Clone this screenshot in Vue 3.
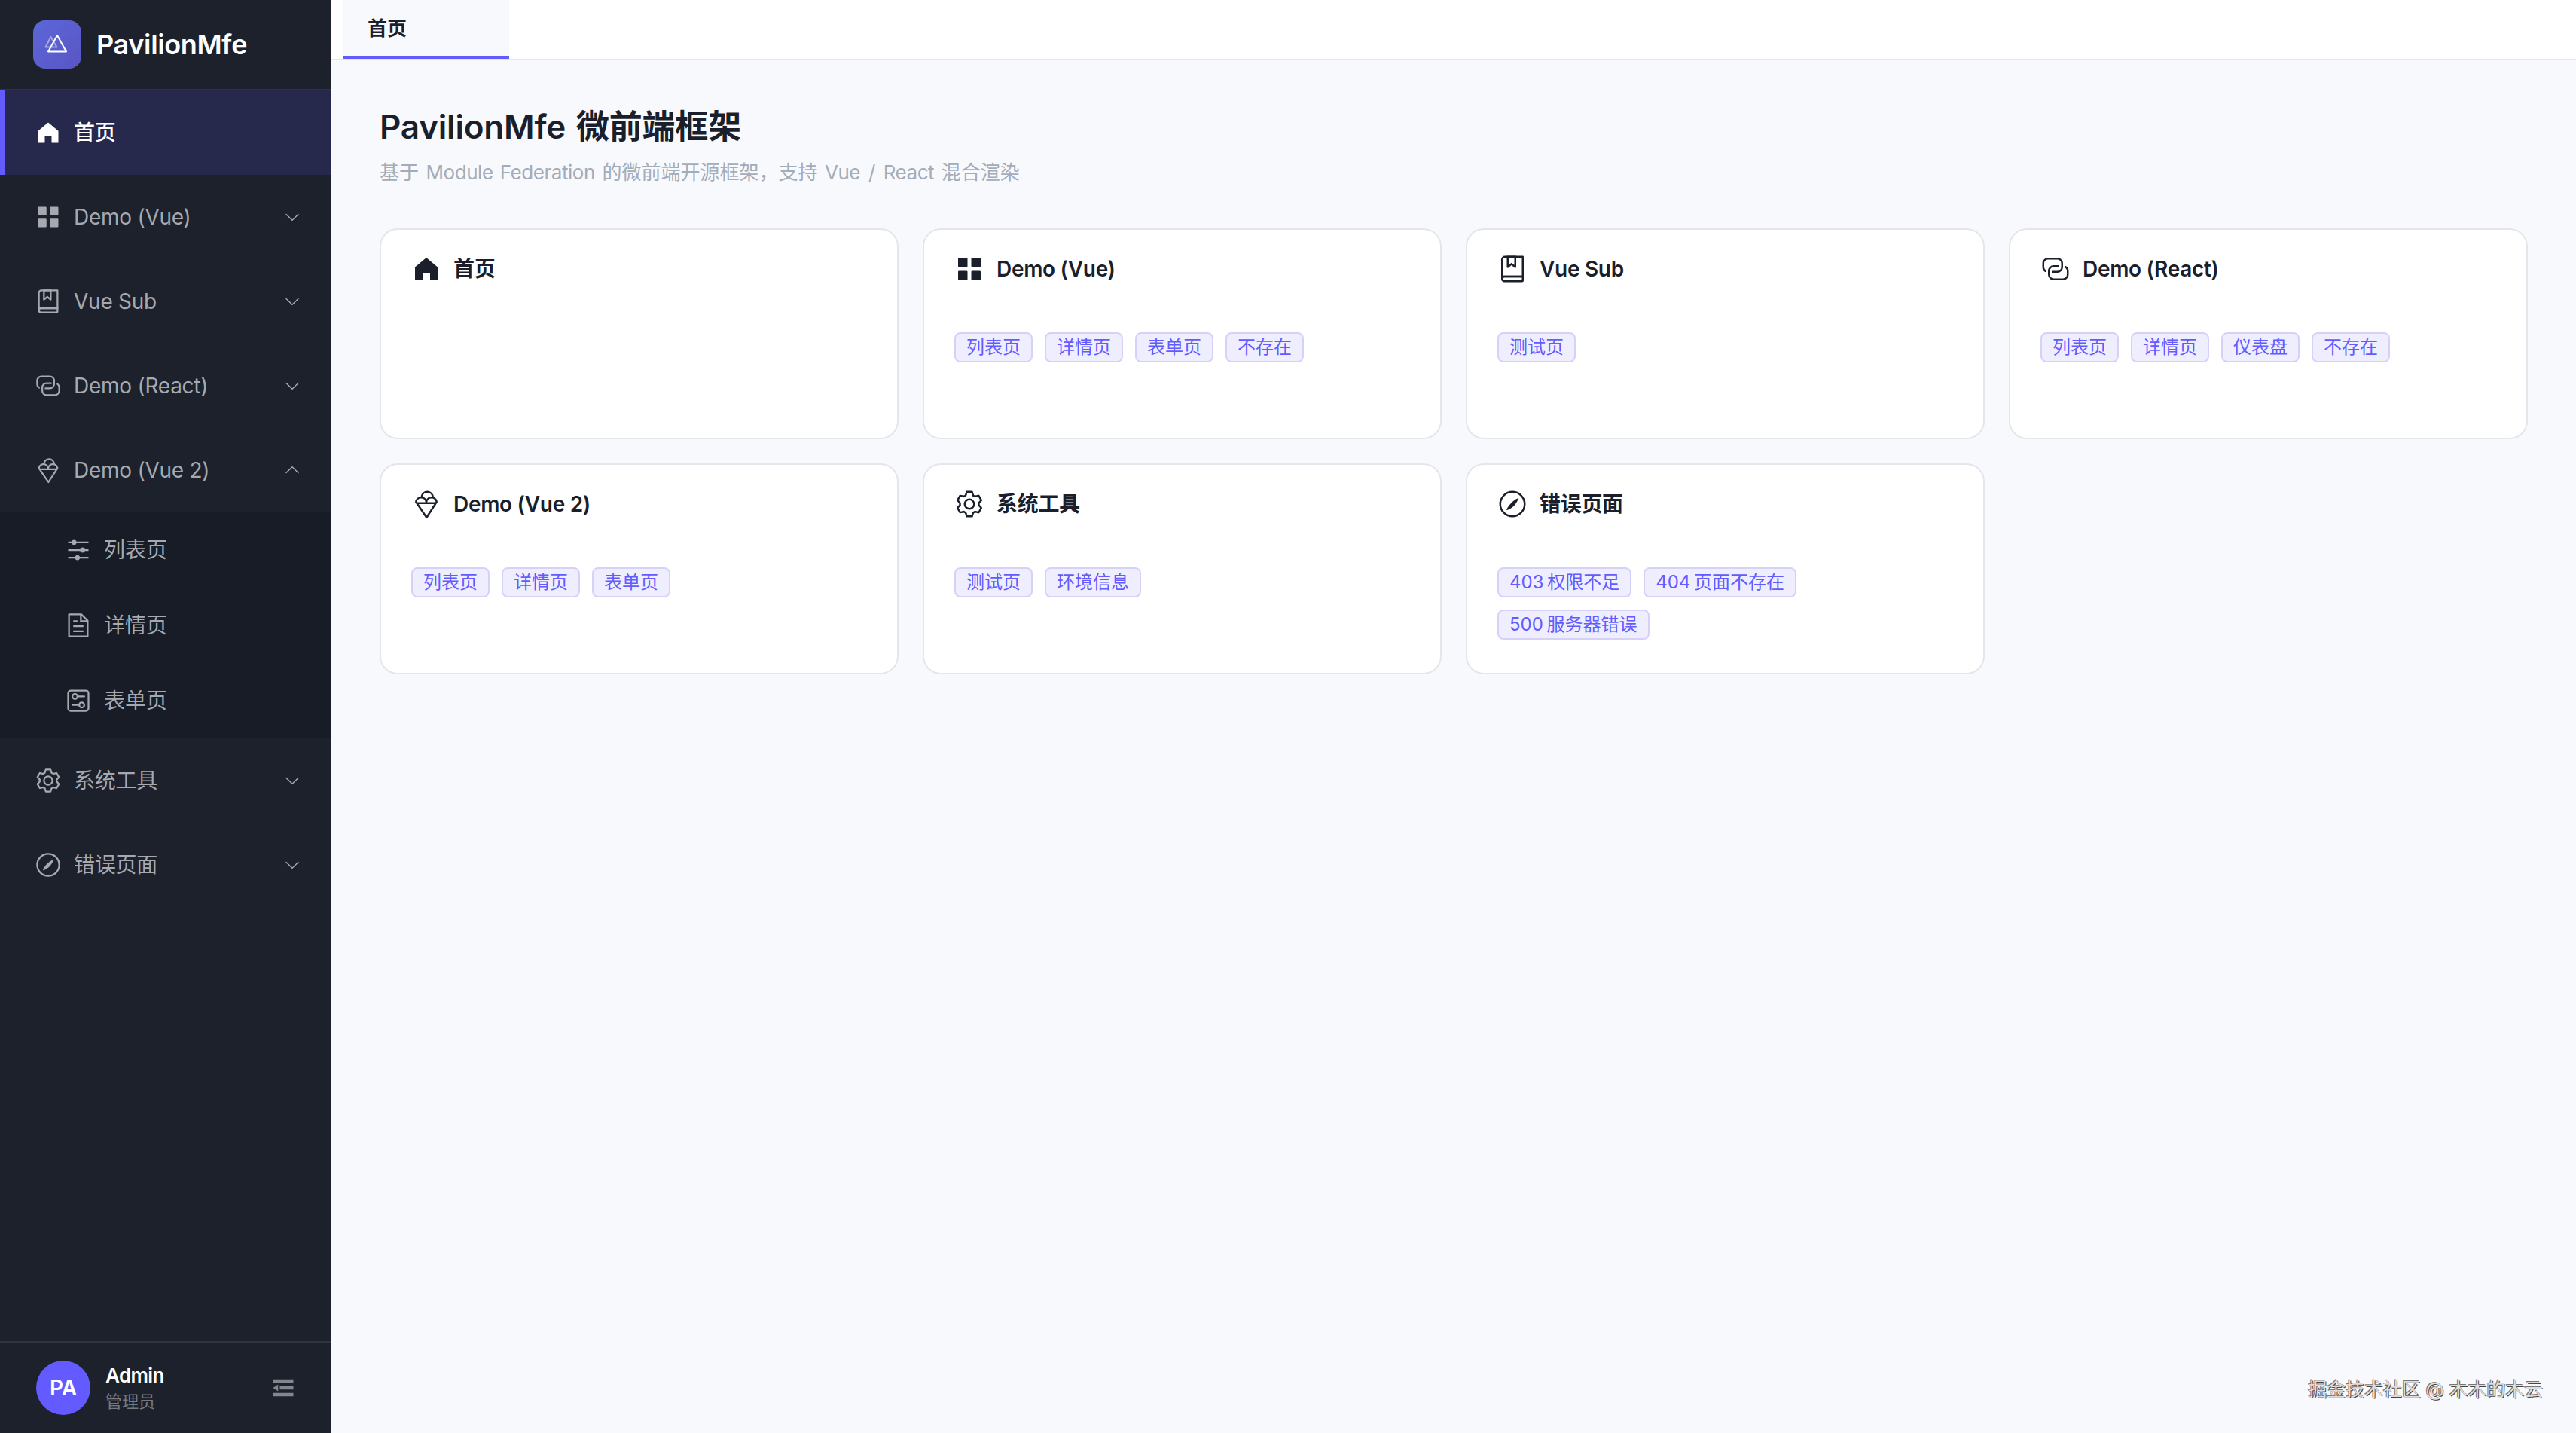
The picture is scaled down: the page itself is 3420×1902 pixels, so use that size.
<script setup>
import { ref } from "vue";

// Icon paths, 1024 x 1024 grid
const icons = {
  home: ["M512 128 128 447.936V896h255.936V640H640v256h255.936V447.936z"],
  menu: [
    "M160 448a32 32 0 0 1-32-32V160.064a32 32 0 0 1 32-32h256a32 32 0 0 1 32 32V416a32 32 0 0 1-32 32zm448 0a32 32 0 0 1-32-32V160.064a32 32 0 0 1 32-32h255.936a32 32 0 0 1 32 32V416a32 32 0 0 1-32 32zM160 896a32 32 0 0 1-32-32V608a32 32 0 0 1 32-32h256a32 32 0 0 1 32 32v256a32 32 0 0 1-32 32zm448 0a32 32 0 0 1-32-32V608a32 32 0 0 1 32-32h255.936a32 32 0 0 1 32 32v256a32 32 0 0 1-32 32z",
  ],
  collection: [
    "M192 736h640V128H256a64 64 0 0 0-64 64zm64-672h608a32 32 0 0 1 32 32v672a32 32 0 0 1-32 32H160l-32 57.536V192A128 128 0 0 1 256 64",
    "M240 800a48 48 0 1 0 0 96h592v-96zm0-64h656v160a64 64 0 0 1-64 64H240a112 112 0 0 1 0-224m144-608v250.88l96-76.8 96 76.8V128zm-64-64h320v381.44a32 32 0 0 1-51.968 24.96L480 384l-108.032 86.4A32 32 0 0 1 320 445.44z",
  ],
  connection: [
    "M640 384v64H448a128 128 0 0 0-128 128v128a128 128 0 0 0 128 128h320a128 128 0 0 0 128-128V576a128 128 0 0 0-64-110.848V394.88c74.56 26.368 128 97.472 128 181.056v128a192 192 0 0 1-192 192H448a192 192 0 0 1-192-192V576a192 192 0 0 1 192-192z",
    "M384 640v-64h192a128 128 0 0 0 128-128V320a128 128 0 0 0-128-128H256a128 128 0 0 0-128 128v128a128 128 0 0 0 64 110.848v70.272A192.06 192.06 0 0 1 64 448V320a192 192 0 0 1 192-192h320a192 192 0 0 1 192 192v128a192 192 0 0 1-192 192z",
  ],
  iceCream: [
    "M128.64 448a208 208 0 0 1 193.536-191.552 224 224 0 0 1 445.248 15.488A208.13 208.13 0 0 1 894.784 448H896L548.8 983.68a32 32 0 0 1-53.248.704L128 448zm64.256 0h286.208a144 144 0 0 0-286.208 0m351.36 0h286.272a144 144 0 0 0-286.272 0zm-294.848 64 271.808 396.608L778.24 512zM511.68 352.64a207.87 207.87 0 0 1 189.184-96.192 160 160 0 0 0-314.752 5.632c52.608 12.992 97.28 46.08 125.568 90.56",
  ],
  operation: [
    "M389.44 768a96.064 96.064 0 0 1 181.12 0H896v64H570.56a96.064 96.064 0 0 1-181.12 0H128v-64zm192-288a96.064 96.064 0 0 1 181.12 0H896v64H762.56a96.064 96.064 0 0 1-181.12 0H128v-64zm-320-288a96.064 96.064 0 0 1 181.12 0H896v64H442.56a96.064 96.064 0 0 1-181.12 0H128v-64z",
  ],
  document: [
    "M832 384H576V128H192v768h640zm-26.496-64L640 154.496V320zM160 64h480l256 256v608a32 32 0 0 1-32 32H160a32 32 0 0 1-32-32V96a32 32 0 0 1 32-32m160 448h384v64H320zm0-192h160v64H320zm0 384h384v64H320z",
  ],
  setUp: [
    "M224 160a64 64 0 0 0-64 64v576a64 64 0 0 0 64 64h576a64 64 0 0 0 64-64V224a64 64 0 0 0-64-64zm0-64h576a128 128 0 0 1 128 128v576a128 128 0 0 1-128 128H224A128 128 0 0 1 96 800V224A128 128 0 0 1 224 96",
    "M384 416a64 64 0 1 0 0-128 64 64 0 0 0 0 128m0 64a128 128 0 1 1 0-256 128 128 0 0 1 0 256",
    "M480 320h256q32 0 32 32t-32 32H480q-32 0-32-32t32-32m160 416a64 64 0 1 0 0-128 64 64 0 0 0 0 128m0 64a128 128 0 1 1 0-256 128 128 0 0 1 0 256",
    "M288 640h256q32 0 32 32t-32 32H288q-32 0-32-32t32-32",
  ],
  setting: [
    "M600.704 64a32 32 0 0 1 30.464 22.208l35.2 109.376c14.784 7.232 28.928 15.36 42.432 24.512l112.384-24.192a32 32 0 0 1 34.432 15.36L944.32 364.8a32 32 0 0 1-4.032 37.504l-77.12 85.12a357 357 0 0 1 0 49.024l77.12 85.248a32 32 0 0 1 4.032 37.504l-88.704 153.6a32 32 0 0 1-34.432 15.296L708.8 803.904c-13.44 9.088-27.648 17.28-42.368 24.512l-35.264 109.376A32 32 0 0 1 600.704 960H423.296a32 32 0 0 1-30.464-22.208L357.696 828.48a352 352 0 0 1-42.56-24.64l-112.32 24.256a32 32 0 0 1-34.432-15.36L79.68 659.2a32 32 0 0 1 4.032-37.504l77.12-85.248a357 357 0 0 1 0-48.896l-77.12-85.248A32 32 0 0 1 79.68 364.8l88.704-153.6a32 32 0 0 1 34.432-15.296l112.32 24.256c13.568-9.152 27.776-17.408 42.56-24.64l35.2-109.312A32 32 0 0 1 423.232 64H600.64zm-23.424 64H446.72l-36.352 113.088-24.512 11.968a294 294 0 0 0-34.816 20.096l-22.656 15.36-116.224-25.088-65.28 113.152 79.68 88.192-1.92 27.136a293 293 0 0 0 0 40.192l1.92 27.136-79.808 88.192 65.344 113.152 116.224-25.024 22.656 15.296a294 294 0 0 0 34.816 20.096l24.512 11.968L446.72 896h130.688l36.48-113.152 24.448-11.904a288 288 0 0 0 34.752-20.096l22.592-15.296 116.288 25.024 65.28-113.152-79.744-88.192 1.92-27.136a293 293 0 0 0 0-40.256l-1.92-27.136 79.808-88.128-65.344-113.152-116.288 24.96-22.592-15.232a288 288 0 0 0-34.752-20.096l-24.448-11.904L577.344 128zM512 320a192 192 0 1 1 0 384 192 192 0 0 1 0-384m0 64a128 128 0 1 0 0 256 128 128 0 0 0 0-256",
  ],
  compass: [
    "M512 896a384 384 0 1 0 0-768 384 384 0 0 0 0 768m0 64a448 448 0 1 1 0-896 448 448 0 0 1 0 896",
    "M725.888 315.008C676.48 428.672 624 513.28 568.576 568.64c-55.424 55.424-139.968 107.904-253.568 157.312-12.8-42.176 65.28-155.264 157.312-253.568 98.304-92.032 211.392-170.112 253.568-157.376",
  ],
};

const menus = ref([
  { key: "home", title: "首页", icon: "home", children: [] },
  {
    key: "vue",
    title: "Demo (Vue)",
    icon: "menu",
    children: [{ title: "列表页" }, { title: "详情页" }, { title: "表单页" }, { title: "不存在" }],
  },
  { key: "sub", title: "Vue Sub", icon: "collection", children: [{ title: "测试页" }] },
  {
    key: "react",
    title: "Demo (React)",
    icon: "connection",
    children: [{ title: "列表页" }, { title: "详情页" }, { title: "仪表盘" }, { title: "不存在" }],
  },
  {
    key: "vue2",
    title: "Demo (Vue 2)",
    icon: "iceCream",
    children: [
      { title: "列表页", icon: "operation" },
      { title: "详情页", icon: "document" },
      { title: "表单页", icon: "setUp" },
    ],
  },
  {
    key: "tools",
    title: "系统工具",
    icon: "setting",
    children: [{ title: "测试页" }, { title: "环境信息" }],
  },
  {
    key: "error",
    title: "错误页面",
    icon: "compass",
    children: [{ title: "403 权限不足" }, { title: "404 页面不存在" }, { title: "500 服务器错误" }],
  },
]);

const activeKey = ref("home");
const openKey = ref("vue2");

// Leaf items become active, groups open and close
const clickMenu = (item) => {
  if (item.children.length === 0) {
    activeKey.value = item.key;
    return;
  }
  openKey.value = openKey.value === item.key ? "" : item.key;
};
</script>

<template>
  <div class="layout">
    <aside class="sidebar">
      <div class="brand">
        <svg class="logo" viewBox="0 0 64 64">
          <defs>
            <linearGradient id="logoBg" x1="0" y1="0" x2="1" y2="1">
              <stop offset="0" stop-color="#5b67d8" />
              <stop offset="1" stop-color="#5a55c4" />
            </linearGradient>
          </defs>
          <rect width="64" height="64" rx="16" fill="url(#logoBg)" />
          <path d="M23.5 22 16.5 35.5h15z" fill="none" stroke="#fff" stroke-opacity=".45" stroke-width="2" stroke-linejoin="round" />
          <path d="M32 20 20 41.5h24z" fill="none" stroke="#fff" stroke-width="2" stroke-linejoin="round" />
        </svg>
        <span class="brand-name">PavilionMfe</span>
      </div>

      <nav class="menu">
        <template v-for="item in menus" :key="item.key">
          <div class="menu-item" :class="{ active: item.key === activeKey }" @click="clickMenu(item)">
            <svg class="icon" viewBox="0 0 1024 1024">
              <path v-for="d in icons[item.icon]" :key="d" :d="d" />
            </svg>
            <span class="menu-title">{{ item.title }}</span>
            <svg
              v-if="item.children.length"
              class="arrow"
              :class="{ open: item.key === openKey }"
              viewBox="0 0 1024 1024"
            >
              <path d="M831.872 340.864 512 652.672 192.128 340.864a30.59 30.59 0 0 0-42.752 0 29.12 29.12 0 0 0 0 41.6L489.664 714.24a32 32 0 0 0 44.672 0l340.288-331.712a29.12 29.12 0 0 0 0-41.728 30.59 30.59 0 0 0-42.752 0z" />
            </svg>
          </div>
          <div v-if="item.key === openKey" class="submenu">
            <div v-for="child in item.children" :key="child.title" class="submenu-item">
              <svg v-if="child.icon" class="icon" viewBox="0 0 1024 1024">
                <path v-for="d in icons[child.icon]" :key="d" :d="d" />
              </svg>
              <span>{{ child.title }}</span>
            </div>
          </div>
        </template>
      </nav>

      <!-- Current user -->
      <div class="user">
        <div class="avatar">PA</div>
        <div class="user-info">
          <span class="user-name">Admin</span>
          <span class="user-role">管理员</span>
        </div>
        <svg class="icon fold" viewBox="0 0 1024 1024">
          <path d="M896 192H128v128h768zm0 256H384v128h512zm0 256H128v128h768zM320 384 128 512l192 128z" />
        </svg>
      </div>
    </aside>

    <div class="main">
      <div class="tabs">
        <div class="tab">首页</div>
      </div>

      <main class="content">
        <h1>PavilionMfe 微前端框架</h1>
        <p class="subtitle">
          基于 <span class="latin">Module Federation</span> 的微前端开源框架，支持
          <span class="latin slash">Vue / React</span> 混合渲染
        </p>

        <div class="cards">
          <div v-for="item in menus" :key="item.key" class="card">
            <div class="card-head">
              <svg class="card-icon" viewBox="0 0 1024 1024">
                <path v-for="d in icons[item.icon]" :key="d" :d="d" />
              </svg>
              <span>{{ item.title }}</span>
            </div>
            <div class="tags">
              <span v-for="child in item.children" :key="child.title" class="tag">{{ child.title }}</span>
            </div>
          </div>
        </div>
      </main>
    </div>

    <div class="watermark">掘金技术社区 @ 木木的木云</div>
  </div>
</template>

<style>
body {
  margin: 0;
  background: #f8f9fd;
}
</style>

<style scoped>
.layout {
  position: relative;
  display: flex;
  height: 100vh;
  overflow: hidden;
  font-family: Inter, "Noto Sans CJK SC", sans-serif;
  color: #1a1f2b;
}

svg {
  display: block;
  flex-shrink: 0;
  fill: currentColor;
}

/* Sidebar */
.sidebar {
  display: flex;
  flex-direction: column;
  flex-shrink: 0;
  width: 440px;
  background: #1c212c;
  color: #a6a9b0;
}

.brand {
  display: flex;
  align-items: center;
  gap: 20px;
  box-sizing: border-box;
  height: 120px;
  padding: 0 44px;
  border-bottom: 2px solid #2f323f;
}

.logo {
  width: 64px;
  height: 64px;
}

.brand-name {
  color: #fff;
  font-size: 36px;
  font-weight: 600;
  letter-spacing: -0.35px;
}

.menu {
  flex: 1;
}

.menu-item {
  display: flex;
  align-items: center;
  gap: 16px;
  box-sizing: border-box;
  height: 112px;
  padding: 0 40px 0 46px;
  font-size: 28px;
  letter-spacing: -0.25px;
  line-height: 40px;
  cursor: pointer;
}

.menu-item.active {
  padding-left: 40px;
  border-left: 6px solid #635bff;
  background: #26284c;
  color: #fff;
  font-weight: 500;
}

.menu-title {
  flex: 1;
}

.icon {
  width: 36px;
  height: 36px;
}

.arrow {
  width: 24px;
  height: 24px;
}

.arrow.open {
  transform: rotate(180deg);
}

.submenu {
  background: #171c27;
}

.submenu-item {
  display: flex;
  align-items: center;
  gap: 16px;
  height: 100px;
  padding-left: 86px;
  font-size: 28px;
  line-height: 40px;
}

.user {
  display: flex;
  align-items: center;
  box-sizing: border-box;
  height: 122px;
  padding: 0 46px 0 48px;
  border-top: 2px solid #2f323f;
}

.avatar {
  width: 72px;
  height: 72px;
  border-radius: 50%;
  background: #635bff;
  color: #fff;
  font-size: 28px;
  font-weight: 600;
  line-height: 72px;
  text-align: center;
}

.user-info {
  display: flex;
  flex: 1;
  flex-direction: column;
  margin-left: 20px;
}

.user-name {
  color: #fff;
  font-size: 26px;
  font-weight: 600;
  letter-spacing: -0.6px;
  line-height: 36px;
}

.user-role {
  color: #777a82;
  font-size: 22px;
  line-height: 32px;
}

.fold {
  color: #83868d;
}

/* Main area */
.main {
  flex: 1;
  min-width: 0;
  background: #f8f9fd;
}

.tabs {
  display: flex;
  box-sizing: border-box;
  height: 80px;
  padding-left: 16px;
  border-bottom: 2px solid #e4e7ea;
  background: #fff;
}

.tab {
  box-sizing: border-box;
  width: 220px;
  padding: 0 32px;
  border-bottom: 4px solid #635bff;
  background: #f8f9fd;
  font-size: 26px;
  font-weight: 600;
  line-height: 76px;
}

.content {
  padding: 56px 64px;
}

h1 {
  margin: 0;
  font-size: 44px;
  font-weight: 600;
  letter-spacing: -0.2px;
  line-height: 64px;
  word-spacing: 3px;
}

.subtitle {
  margin: 9px 0 54px;
  color: #a3acb9;
  font-size: 26px;
  line-height: 40px;
  word-spacing: 2.2px;
}

.latin {
  letter-spacing: -0.45px;
}

.slash {
  word-spacing: 4px;
}

.cards {
  display: grid;
  grid-template-columns: repeat(4, 1fr);
  gap: 32px;
}

.card {
  box-sizing: border-box;
  height: 280px;
  padding: 32px 40px;
  border: 2px solid #e4e6eb;
  border-radius: 24px;
  background: #fff;
}

.card-head {
  display: flex;
  align-items: center;
  gap: 16px;
  height: 40px;
  font-size: 28px;
  font-weight: 600;
  letter-spacing: -0.3px;
  line-height: 40px;
}

.card-icon {
  width: 40px;
  height: 40px;
}

.tags {
  display: flex;
  flex-wrap: wrap;
  gap: 16px;
  margin-top: 64px;
}

.tag {
  box-sizing: border-box;
  height: 40px;
  padding: 0 14px;
  border: 2px solid #d6d1f8;
  border-radius: 8px;
  background: #efeeff;
  color: #635bff;
  font-size: 24px;
  line-height: 35px;
  word-spacing: -2px;
}

.watermark {
  position: absolute;
  right: 44px;
  bottom: 40px;
  color: #dedede;
  font-size: 25px;
  letter-spacing: -0.1px;
  line-height: 36px;
  text-shadow: -1px -1px 0 #777, 1px 1px 0 #444;
}
</style>
